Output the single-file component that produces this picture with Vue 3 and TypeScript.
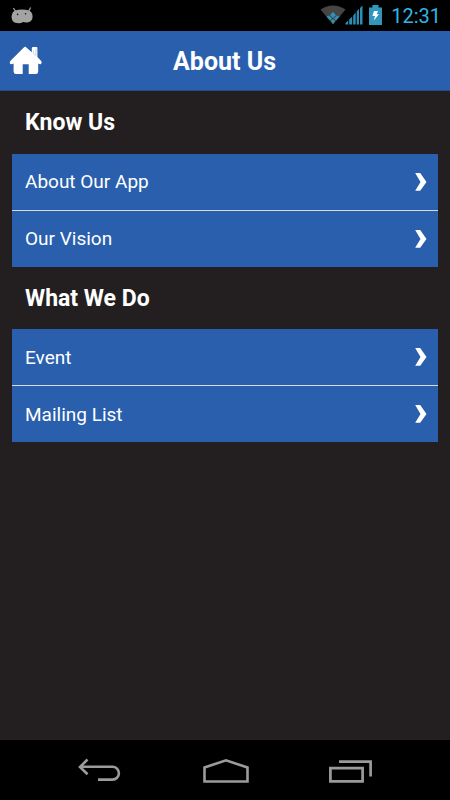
<script setup lang="ts">
interface Section {
  title: string
  items: string[]
}

const sections: Section[] = [
  { title: 'Know Us', items: ['About Our App', 'Our Vision'] },
  { title: 'What We Do', items: ['Event', 'Mailing List'] },
]
</script>

<template>
  <div class="screen">
    <div class="status">
      <svg class="debug" width="24" height="18" viewBox="0 0 24 18">
        <path d="M3.4 1.2 5.8 4.5M20.6.5l-2 4" stroke="#a3a3a3" stroke-width="1.2" />
        <path d="M5 3.4Q12 1.4 19 3.4 22.5 5 22.6 9.5 22.5 14 18.5 15.2 15.5 15.8 13 15 10.5 16.8 7 16 3 15.8 2 12.5 1 10.5 1.8 8 2.3 4.5 5 3.4Z" fill="#a3a3a3" />
        <circle cx="7.6" cy="7.4" r=".8" fill="#111" />
        <circle cx="15.6" cy="6.8" r=".8" fill="#111" />
      </svg>
      <div class="indicators">
        <svg width="26" height="20" viewBox="0 0 26 20">
          <path d="M.5 4.5Q13-3.5 25.5 4.5L13 19.5Z" fill="#454545" />
          <path d="M13 7l3 3-3 3-3-3ZM9 10.5l3 3-2 2-3.5-4ZM17 10.5l2.5 1-3.5 4-2-2ZM13 14l2 2-2 3-2-3Z" fill="#2f93b8" />
        </svg>
        <svg class="signal" width="18" height="20" viewBox="0 0 18 20">
          <path d="M.5 19.5V18L3.2 15.5v4ZM4.2 19.5v-5l3-3v8ZM8.2 19.5v-9l2.5-3v12ZM11.7 19.5V6.5l2.3-2.7v15.7ZM15 19.5V3L17.5.5v19Z" fill="#2b8fb5" />
        </svg>
        <svg class="battery" width="13" height="20" viewBox="0 0 13 20">
          <path d="M0 2.4h3.4V0h6.2v2.4H13V20H0Z" fill="#3295bb" />
          <path d="M5 6h4L7.7 9.2H10L4.8 15.5 6 11H3.4Z" fill="#fff" />
        </svg>
        <span class="clock">12:31</span>
      </div>
    </div>

    <header class="header">
      <svg class="home" width="34" height="30" viewBox="0 0 34 30">
        <path d="M16.5.8 22.8 6.3V2.4Q22.8 1 24.2 1h3.2q1 0 1 1v9L32.2 15q1.2 1.8-.2 2.9-1.2.7-2.8-.5V25.5q0 2.4-2 2.4h-7.5V18.2h-6V27.9H6.6q-2 0-2-2.4V17.4Q2 19 .9 17.5.2 16 1.8 14.4L14.8 1.4Q15.8.3 16.5.8Z" fill="#fff" />
        <path d="M24.4 4.5v3.1l2.5 2V2.5" fill="none" stroke="#bdcde8" stroke-width=".8" />
      </svg>
      <h1>About Us</h1>
    </header>

    <main class="content">
      <section v-for="section in sections" :key="section.title">
        <h2>{{ section.title }}</h2>
        <ul>
          <li v-for="item in section.items" :key="item">
            <span>{{ item }}</span>
            <svg width="14" height="20" viewBox="0 0 14 20">
              <path d="M1.2 1h5L12.5 10 6.2 18.8h-5L6.5 10Z" fill="#fff" />
            </svg>
          </li>
        </ul>
      </section>
    </main>

    <nav class="nav">
      <svg width="44" height="26" viewBox="0 0 44 26">
        <path d="M9.5 1.5 2 9l7.5 7.3M2.5 8.8H34.5a6.3 6.3 0 0 1 0 12.8H20" fill="none" stroke="#9b9b9b" stroke-width="2.6" />
      </svg>
      <svg width="46" height="26" viewBox="0 0 46 26">
        <path d="M1.5 23.5V9.5L23 2.3 44.5 9.5v14Z" fill="none" stroke="#9b9b9b" stroke-width="2.6" />
      </svg>
      <svg width="44" height="26" viewBox="0 0 44 26">
        <path d="M1.4 10.1h32.2v13.2H1.4ZM10 3.6h31.6v14.9" fill="none" stroke="#9b9b9b" stroke-width="2.7" />
      </svg>
    </nav>
  </div>
</template>

<style>
body {
  background: #231f20;
}
</style>

<style scoped>
.screen {
  display: flex;
  flex-direction: column;
  height: 800px;
  background: #231f20;
  color: #fff;
  font-family: Roboto, sans-serif;
}
.status {
  display: flex;
  flex: 0 0 31px;
  align-items: flex-start;
  justify-content: space-between;
  box-sizing: border-box;
  padding: 5px 9px 0 10px;
  background: #000;
}
.debug {
  margin-top: 2px;
}
.indicators {
  display: flex;
}
.signal {
  margin-left: -1px;
}
.battery {
  margin-left: 6px;
}
.clock {
  margin-left: 9px;
  color: #33b5e5;
  font-size: 20px;
  line-height: 22px;
}
.header {
  display: grid;
  grid-template-columns: 36px 1fr 36px;
  flex: 0 0 60px;
  align-items: center;
  box-sizing: border-box;
  padding: 0 10px 0 9px;
  background: #2a5fae;
  border-bottom: 1px solid #234c8d;
}
h1 {
  margin: 2px 0 0;
  font-size: 25px;
  font-weight: 700;
  line-height: 32px;
  text-align: center;
}
.content {
  flex: 1;
  padding: 0 12px;
}
h2 {
  margin: 0;
  padding: 1px 13px 0;
  font-size: 23px;
  font-weight: 700;
  line-height: 61.5px;
}
ul {
  margin: 0;
  padding: 0;
  list-style: none;
}
li {
  display: flex;
  align-items: center;
  justify-content: space-between;
  box-sizing: border-box;
  width: 425.5px;
  height: 56px;
  padding: 0 10px 0 13px;
  background: #2a5fae;
  font-size: 19px;
}
li + li {
  height: 57px;
  border-top: 1px solid #d5dae5;
}
.nav {
  display: flex;
  flex: 0 0 60px;
  align-items: center;
  justify-content: space-between;
  box-sizing: border-box;
  padding: 2px 77px 0 78px;
  background: #000;
}
</style>
